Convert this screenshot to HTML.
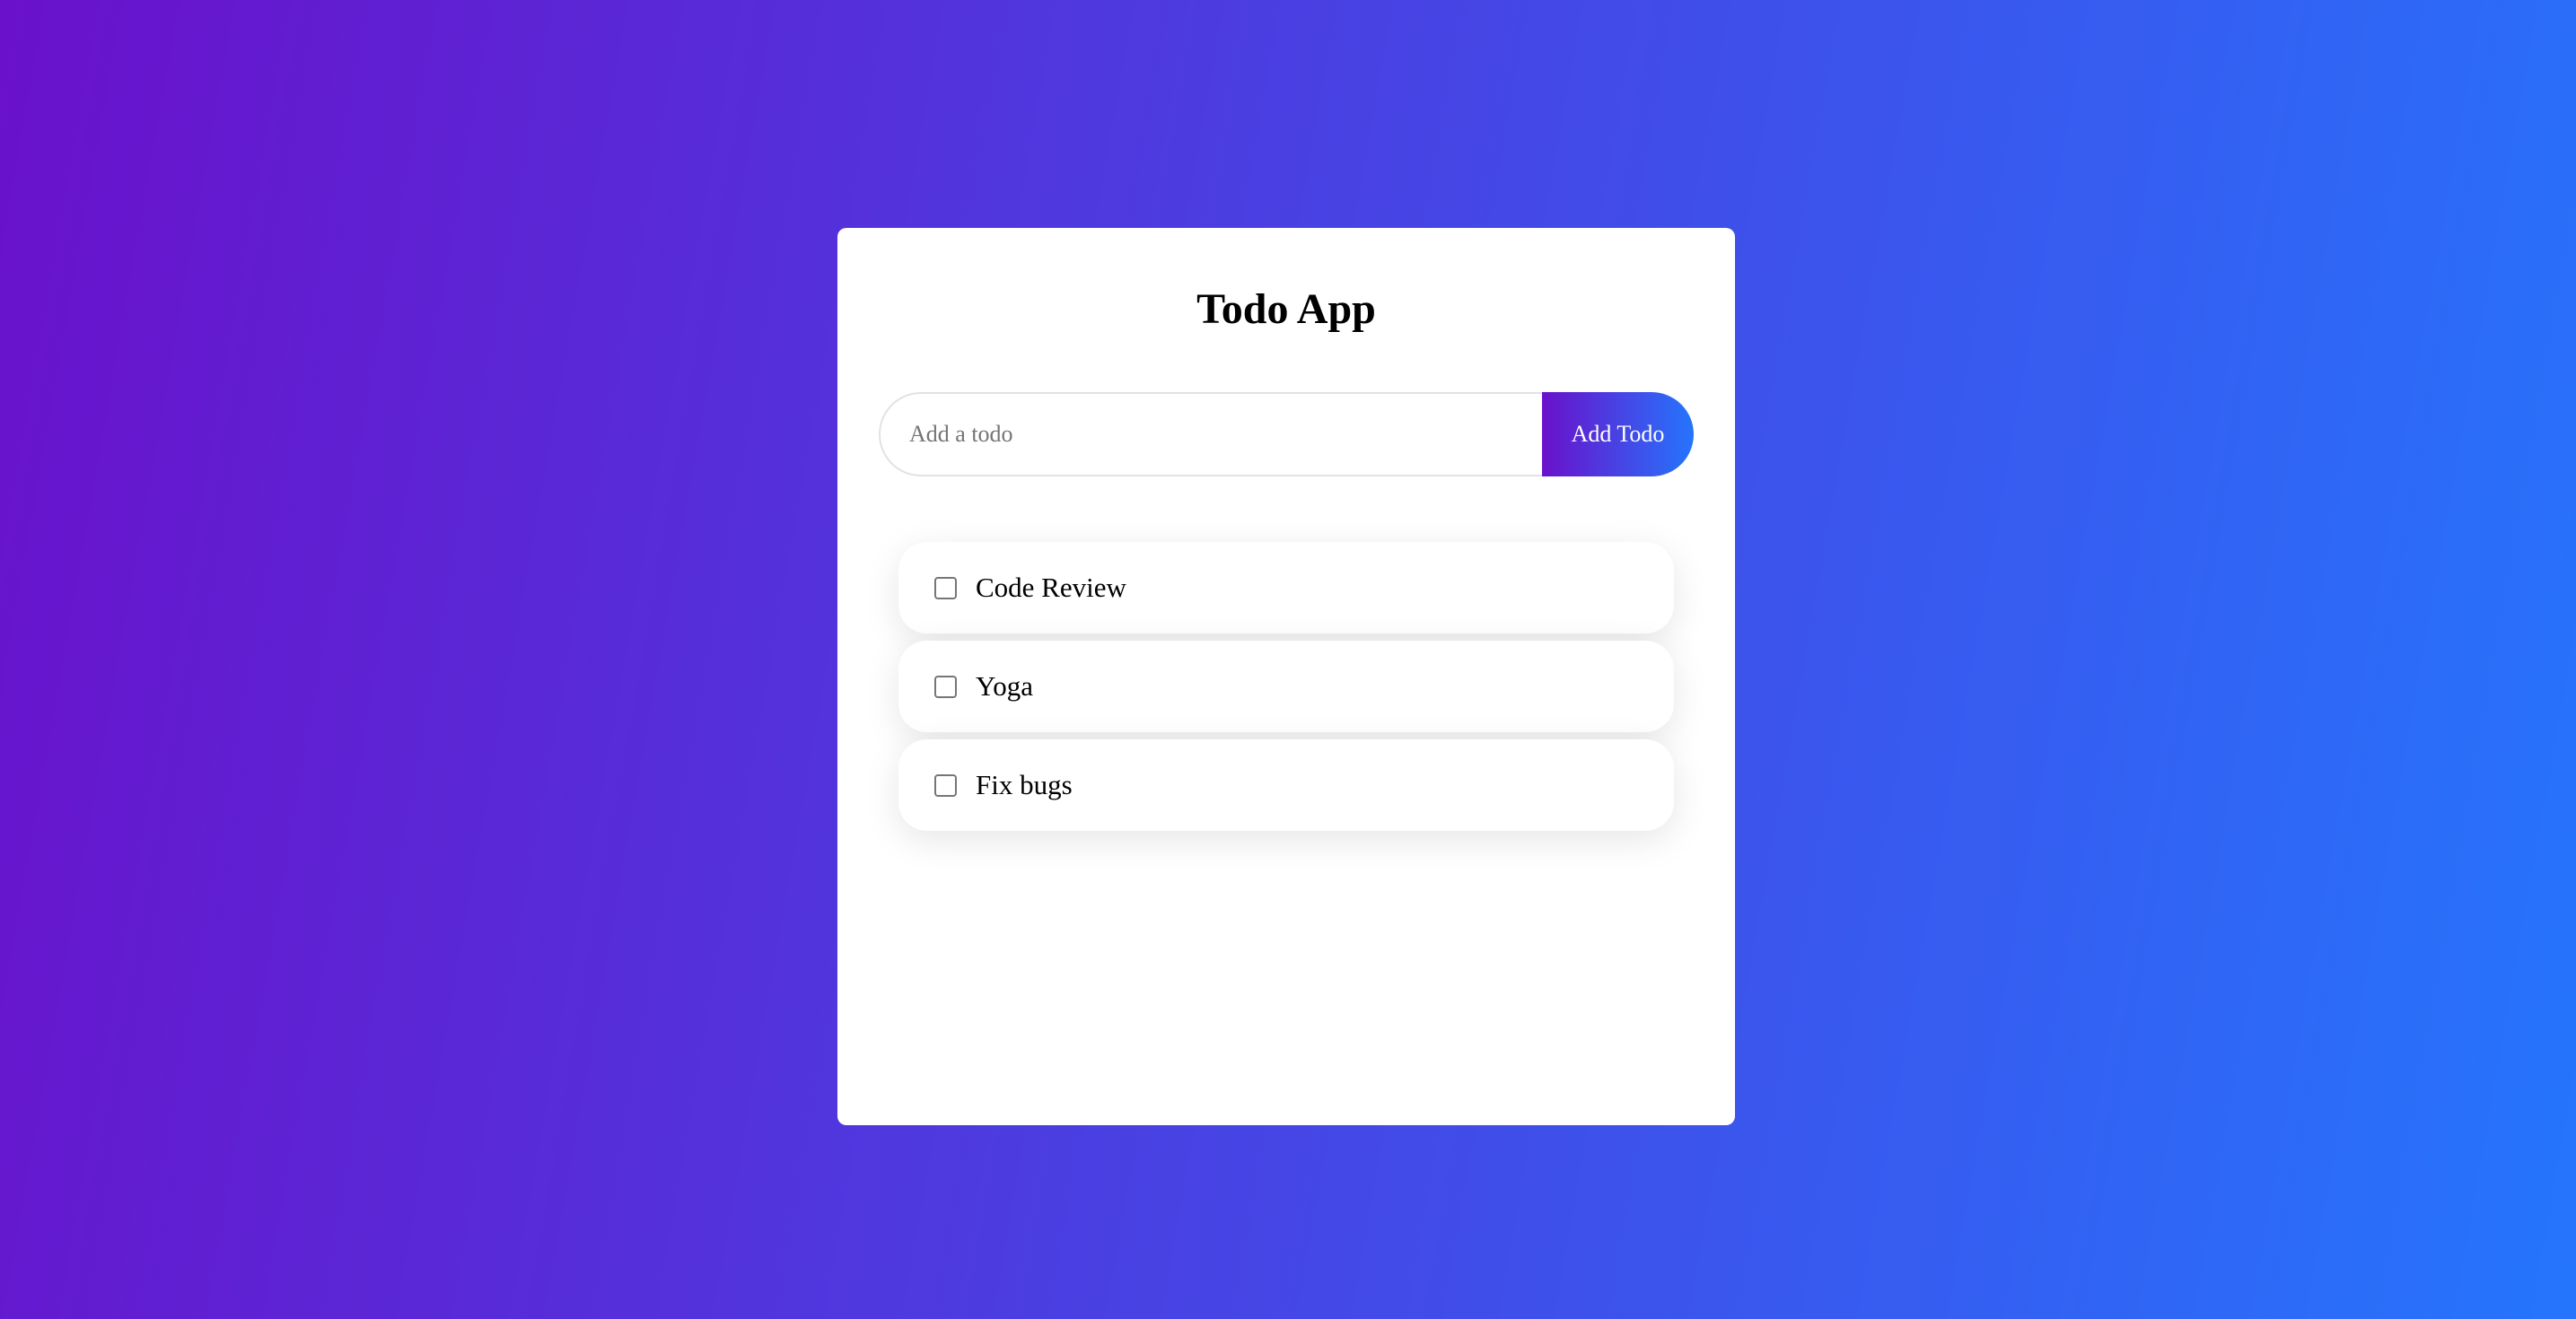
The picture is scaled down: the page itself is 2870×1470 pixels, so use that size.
<!DOCTYPE html>
<html><head><meta charset="utf-8"><style>
html,body{margin:0;padding:0;width:2870px;height:1470px;overflow:hidden}
body{background:linear-gradient(100deg,#6a11cb 0%,#2575fc 100%);font-family:"Liberation Serif",serif;position:relative}
.card{position:absolute;left:933px;top:254px;width:1000px;height:1000px;background:#fff;border-radius:10px}
h1{position:absolute;left:0;right:0;margin:0;text-align:center;font-size:48px;font-weight:bold;line-height:72px;top:55px}
.row{position:absolute;left:46px;top:183px;width:908px;height:94px;display:flex}
.inp{flex:1;height:94px;box-sizing:border-box;border:2px solid #e2e2e6;border-right:none;border-radius:47px 0 0 47px;font-size:26px;color:#757575;line-height:90px;padding-left:32px}
.btn{width:169px;height:94px;background:linear-gradient(to right,#6a11cb,#2575fc);border-radius:0 47px 47px 0;color:#fff;font-size:26px;line-height:94px;text-align:center}
.item{position:absolute;left:68px;width:864px;height:102px;background:#fff;border-radius:32px;box-shadow:0 10px 40px rgba(0,0,0,.1)}
.cb{position:absolute;left:40px;top:39px;width:21px;height:21px;border:2px solid #767676;border-radius:4px}
.t{position:absolute;left:86px;top:0;line-height:102px;font-size:31px;color:#000}
</style></head><body>
<div class="card">
<h1>Todo App</h1>
<div class="row"><div class="inp">Add a todo</div><div class="btn">Add Todo</div></div>
<div class="item" style="top:350px"><div class="cb"></div><div class="t">Code Review</div></div>
<div class="item" style="top:460px"><div class="cb"></div><div class="t">Yoga</div></div>
<div class="item" style="top:570px"><div class="cb"></div><div class="t">Fix bugs</div></div>
</div>
</body></html>
